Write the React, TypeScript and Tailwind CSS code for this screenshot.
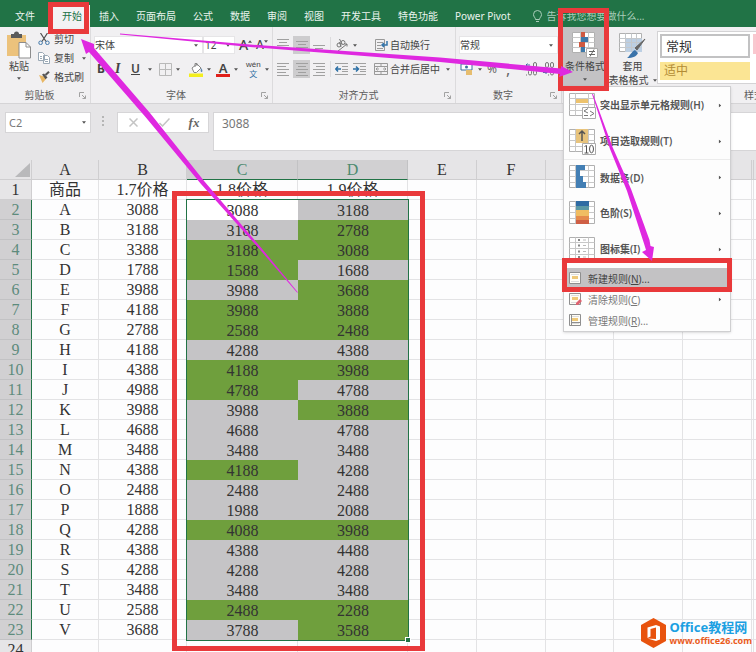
import type { ReactNode } from "react";
import clsx from "clsx";

const TABS = ["插入", "页面布局", "公式", "数据", "审阅", "视图", "开发工具", "特色功能", "Power Pivot"];

// [name, B, C, D]
const ROWS: [string, number, number, number][] = [
  ["A", 3088, 3088, 3188],
  ["B", 3188, 3188, 2788],
  ["C", 3388, 3188, 3088],
  ["D", 1788, 1588, 1688],
  ["E", 3988, 3988, 3688],
  ["F", 4188, 3988, 3888],
  ["G", 2788, 2588, 2488],
  ["H", 4188, 4288, 4388],
  ["I", 4388, 4188, 3988],
  ["J", 4988, 4788, 4788],
  ["K", 3988, 3988, 3888],
  ["L", 4688, 4688, 4788],
  ["M", 3488, 3488, 3488],
  ["N", 4388, 4188, 4288],
  ["O", 2488, 2488, 2488],
  ["P", 1888, 1988, 2088],
  ["Q", 4288, 4088, 3988],
  ["R", 4388, 4388, 4488],
  ["S", 4288, 4288, 4288],
  ["T", 3488, 3488, 3488],
  ["U", 2588, 2488, 2288],
  ["V", 3688, 3788, 3588],
];

const HEADERS = ["A", "B", "C", "D", "E", "F", "", "", "", ""];

function Caret({ className }: { className?: string }) {
  return (
    <svg viewBox="0 0 5 3" className={clsx("w-1 h-[3px] shrink-0", className)} aria-hidden="true">
      <path d="M0 0h5L2.500 3z" fill="#555" />
    </svg>
  );
}

function Launcher() {
  return (
    <svg viewBox="0 0 7 7" className="w-[7px] h-[7px]" fill="none" stroke="#a2a2a2" aria-hidden="true">
      <path d="M.5 5V.5H5M3 3l3.500 3.500M6.500 3.500v3h-3" />
    </svg>
  );
}

function Group({ label, className, children }: { label: string; className: string; children: ReactNode }) {
  return (
    <section className={clsx("flex flex-col shrink-0 border-r border-[#dcdbdd]", className)}>
      <div className="h-[60px]">{children}</div>
      <div className="flex items-center h-4 pr-1">
        <span className="flex-1 text-center text-[#5d5d5d]">{label}</span>
        <Launcher />
      </div>
    </section>
  );
}

function Tool({ label, className, children }: { label: string; className: string; children: ReactNode }) {
  return (
    <button type="button" aria-label={label} className={clsx("flex items-center h-[18px] shrink-0", className)}>
      {children}
    </button>
  );
}

const LINES: Record<string, string> = {
  top: "M0 2.500h12M2 5.500h8M0 8.500h12",
  middle: "M0 4.500h12M2 7.500h8M0 10.500h12",
  bottom: "M0 8.500h12M2 11.500h8M0 14.500h12",
  left: "M0 2.500h12M0 5.500h9M0 8.500h12M0 11.500h9M0 14.500h12",
  center: "M0 2.500h12M2 5.500h8M0 8.500h12M2 11.500h8M0 14.500h12",
  right: "M0 2.500h12M3 5.500h9M0 8.500h12M3 11.500h9M0 14.500h12",
};

function LinesIcon({ kind }: { kind: string }) {
  return (
    <svg viewBox="0 0 12 17" className="w-3 h-[17px]" stroke="#a0a0a0" aria-hidden="true">
      <path d={LINES[kind]} />
    </svg>
  );
}

function IndentIcon({ flip }: { flip?: boolean }) {
  return (
    <svg viewBox="0 0 13 12" className="w-[13px] h-3" fill="none" stroke="#a0a0a0" aria-hidden="true">
      <path d="M0 .5h13M7 3.500h6M7 6.500h6M7 8.500h6M0 11.500h13" />
      <path d={flip ? "M0 6h5M3 3.500L5.500 6 3 8.500" : "M1 6h5M3 3.500L.8 6 3 8.500"} stroke="#2b6fa5" strokeWidth="1.500" />
    </svg>
  );
}

function Divider({ className }: { className?: string }) {
  return <span className={clsx("w-px h-4 bg-[#dcdbdd] shrink-0", className)} />;
}

function ClipboardGroup() {
  return (
    <Group label="剪贴板" className="w-[91px]">
      <div className="flex pt-1">
        <button type="button" className="flex flex-col items-center w-[38px] shrink-0">
          <svg viewBox="0 0 26 28" className="w-[26px] h-7" aria-hidden="true">
            <path d="M1 4h19v21H1z" fill="#ecc27c" />
            <path d="M5 3h3a2.500 2.500 0 0 1 5 0h3v4H5z" fill="#5b5b5b" />
            <path d="M13 11.500h7l4.500 4.500v11H13z" fill="#fff" stroke="#8d8d8d" />
            <path d="M20 11.500V16h4.500" fill="none" stroke="#8d8d8d" />
          </svg>
          <span className="leading-[14px]">粘贴</span>
          <Caret className="mt-1" />
        </button>
        <div className="flex flex-col pt-px">
          <button type="button" className="flex items-center gap-1 h-[14px]">
            <svg viewBox="0 0 12 12" className="w-3 h-3" fill="none" aria-hidden="true">
              <path d="M2.500 0l5.500 8.500M9.500 0L4 8.500" stroke="#4e4e4e" strokeWidth="1.200" />
              <circle cx="2.600" cy="9.800" r="1.800" stroke="#3f76a8" />
              <circle cx="9.400" cy="9.800" r="1.800" stroke="#3f76a8" />
            </svg>
            剪切
          </button>
          <button type="button" className="flex items-center gap-1 h-6">
            <svg viewBox="0 0 12 12" className="w-3 h-3" fill="#fff" stroke="#9aa8b5" aria-hidden="true">
              <path d="M.5.5h4l2 2v6h-6zM5.500 3.500h4l2 2v6h-6z" />
              <path d="M2 4.500h2M2 6.500h2M7 7.500h3M7 9.500h3" />
            </svg>
            复制
            <Caret className="ml-1" />
          </button>
          <button type="button" className="flex items-center gap-1 h-[14px]">
            <svg viewBox="0 0 12 12" className="w-3 h-3" aria-hidden="true">
              <path d="M1 4l5 1.500L8 8l-3.500 4z" fill="#e8b765" />
              <path d="M4 3.500l2-1 3.500 4-2 1.800z" fill="#555" />
              <path d="M7.500 4L11 .8" stroke="#555" strokeWidth="2" />
            </svg>
            格式刷
          </button>
        </div>
      </div>
    </Group>
  );
}

function FontGroup() {
  return (
    <Group label="字体" className="w-[182px]">
      <div className="flex items-center pt-[9px] pl-[3px]">
        <div className="flex items-center w-[109px] h-[18px] pr-1 bg-white border border-[#e6e5e7]">
          <select aria-label="字体" className="flex-1 h-4 appearance-none">
            <option>宋体</option>
          </select>
          <Caret />
        </div>
        <div className="flex items-center w-8 h-[18px] pl-px pr-1 bg-white border border-[#e6e5e7]">
          <select aria-label="字号" className="flex-1 min-w-0 h-4 appearance-none">
            <option>12</option>
          </select>
          <Caret />
        </div>
        <Tool label="增大字号" className="ml-1 w-[17px] text-sm font-medium">
          A<Caret className="mb-2 rotate-180" />
        </Tool>
        <Tool label="减小字号" className="w-4 text-xs font-medium">
          A<Caret className="mb-2" />
        </Tool>
      </div>
      <div className="flex items-center pt-[6px] pl-[6px]">
        <Tool label="加粗" className="w-[18px] text-xs font-bold">B</Tool>
        <Tool label="倾斜" className="w-4 font-['Liberation_Serif',serif] text-sm italic font-bold">I</Tool>
        <Tool label="下划线" className="w-6 gap-2 text-xs font-semibold">
          <span className="underline">U</span>
          <Caret />
        </Tool>
        <Tool label="边框" className="ml-1 w-[30px] gap-1">
          <svg viewBox="0 0 13 13" className="w-[13px] h-[13px]" fill="none" stroke="#b9b9b9" aria-hidden="true">
            <path d="M.5.5h12v12H.5zM6.500.5v12M.5 6.500h12" />
          </svg>
          <Caret />
        </Tool>
        <Tool label="填充颜色" className="w-[27px] gap-1">
          <svg viewBox="0 0 14 15" className="w-[14px] h-[15px]" aria-hidden="true">
            <path d="M3 6l5-4 4 4-4.500 4.500H5z" fill="#fff" stroke="#888" />
            <path d="M6 5V1.500h2V4" fill="none" stroke="#888" />
            <path d="M12 6c2 2 1.500 4 .5 4s-1-2-.5-4z" fill="#5c87b0" />
            <path d="M0 11.500h14V15H0z" fill="#f3ee1f" />
          </svg>
          <Caret />
        </Tool>
        <Tool label="字体颜色" className="w-[30px] gap-1">
          <span className="w-[14px] h-[15px] text-center text-[13px] leading-3 font-semibold border-b-3 border-[#e0201b]">A</span>
          <Caret />
        </Tool>
        <Tool label="拼音" className="w-[22px] gap-1">
          <span className="flex flex-col items-center text-[8px] leading-[9px]">
            <span className="font-['Liberation_Sans',sans-serif]">wén</span>
            <span className="font-['Noto_Sans_CJK_SC',sans-serif] text-[#2f6ea3]">文</span>
          </span>
          <Caret />
        </Tool>
      </div>
    </Group>
  );
}

function AlignGroup() {
  return (
    <Group label="对齐方式" className="w-[183px]">
      <div className="flex items-center pt-[9px] pl-1">
        <Tool label="顶端对齐" className="w-4"><LinesIcon kind="top" /></Tool>
        <Tool label="垂直居中" className="w-[17px] justify-center bg-[#cdccce]"><LinesIcon kind="middle" /></Tool>
        <Tool label="底端对齐" className="w-4 pl-[3px]"><LinesIcon kind="bottom" /></Tool>
        <Divider className="ml-1" />
        <Tool label="方向" className="w-[43px] pl-1 gap-1">
          <svg viewBox="0 0 14 14" className="w-[14px] h-[14px]" fill="none" stroke="#777" aria-hidden="true">
            <circle cx="4" cy="7" r="2" />
            <circle cx="8" cy="4.500" r="2" />
            <path d="M6 9L4.500 4M7 6L4.500 1M3 13l9-7M9.500 6H12v2.500" />
          </svg>
          <Caret />
        </Tool>
        <button type="button" className="flex items-center gap-[2px]">
          <svg viewBox="0 0 14 14" className="w-[14px] h-[14px]" fill="none" stroke="#999" aria-hidden="true">
            <path d="M1.500 1.500h9v11h-9zM3 4.500h6M3 7.500h4M3 10.500h6" />
            <path d="M13 3v4H8M10 5L8 7l2 2" stroke="#3675aa" strokeWidth="1.500" />
          </svg>
          自动换行
        </button>
      </div>
      <div className="flex items-center pt-[6px] pl-1">
        <Tool label="左对齐" className="w-4"><LinesIcon kind="left" /></Tool>
        <Tool label="居中" className="w-[17px] justify-center bg-[#cdccce]"><LinesIcon kind="center" /></Tool>
        <Tool label="右对齐" className="w-4 pl-[3px]"><LinesIcon kind="right" /></Tool>
        <Divider className="ml-1" />
        <Tool label="减少缩进" className="ml-1 w-[18px]"><IndentIcon /></Tool>
        <Tool label="增加缩进" className="w-[21px]"><IndentIcon flip /></Tool>
        <button type="button" className="flex items-center gap-[2px]">
          <svg viewBox="0 0 14 14" className="w-[14px] h-[14px]" fill="none" stroke="#999" aria-hidden="true">
            <path d="M.5 1.500h13v11H.5zM.5 4.500h13M.5 9.500h13M7 1.500v3M7 9.500v3" />
            <path d="M2 7h3M9 7h3M3.500 5.500L2 7l1.500 1.500M10.500 5.500L12 7l-1.500 1.500" />
          </svg>
          合并后居中
          <Caret className="ml-1" />
        </button>
      </div>
    </Group>
  );
}

/* zeros on two lines with a small blue arrow */
function DecimalIcon({ more }: { more?: boolean }) {
  return (
    <svg viewBox="0 0 13 14" className="w-[13px] h-[14px]" fill="none" stroke="#777" aria-hidden="true">
      <rect x="8.500" y=".5" width="3" height="5" rx="1.500" />
      <rect x="3.500" y={more ? "8" : ".5"} width="3" height="5" rx="1.500" />
      <rect x="8.500" y="8" width="3" height="5" rx="1.500" />
      <path d={more ? "M1 13h1M6 5.500h1" : "M1 5.500h1M6 13h1"} />
      <path d={more ? "M5 3H1M2.500 1.500L1 3l1.500 1.500" : "M1 10.500h4M3.500 9L5 10.500 3.500 12"} stroke="#3b6f9e" />
    </svg>
  );
}

function NumberGroup() {
  return (
    <Group label="数字" className="w-[106px]">
      <div className="flex items-center pt-[9px] pl-[3px]">
        <div className="flex items-center w-[99px] h-[18px] pr-1 bg-white border border-[#e6e5e7]">
          <select aria-label="数字格式" className="flex-1 h-4 appearance-none">
            <option>常规</option>
          </select>
          <Caret />
        </div>
      </div>
      <div className="flex items-center pt-[6px] pl-1 text-[#666]">
        <Tool label="会计数字格式" className="w-[27px] gap-1">
          <svg viewBox="0 0 14 14" className="w-[14px] h-[14px]" aria-hidden="true">
            <path d="M1 2h11v6H1z" fill="#fff" stroke="#3b6f9e" />
            <circle cx="6.500" cy="5" r="1.500" fill="#3b6f9e" />
            <path d="M6 8h6v5H6z" fill="#e6bd6f" />
          </svg>
          <Caret />
        </Tool>
        <Tool label="百分比样式" className="w-[19px] text-xs">%</Tool>
        <Tool label="千位分隔样式" className="w-[19px] text-base">,</Tool>
        <Tool label="增加小数位数" className="w-[17px]"><DecimalIcon more /></Tool>
        <Tool label="减少小数位数" className="w-[14px]"><DecimalIcon /></Tool>
      </div>
    </Group>
  );
}

/* small worksheet drawing shared by the larger rule icons */
function SheetIcon({ children }: { children?: ReactNode }) {
  return (
    <svg viewBox="0 0 27 27" className="w-[27px] h-[27px] shrink-0" aria-hidden="true">
      <path d="M.5 1.500h25v22H.5z" fill="#fff" stroke="#b0b0b0" />
      <path d="M.5 6.500h25M.5 12.500h25M.5 18.500h25M6.500 1.500v22M19.500 1.500v22" stroke="#c8c8c8" fill="none" />
      {children}
    </svg>
  );
}

function RuleIcon({ kind }: { kind?: string }) {
  return (
    <svg viewBox="0 0 13 13" className="w-[13px] h-[13px] shrink-0" aria-hidden="true">
      <path d="M.5.5h11v11H.5z" fill="#fffdf6" stroke="#8f8f8f" />
      <path d="M3 4h6v3H3z" fill="#efc978" />
      <path d="M2 2.500h8M2 9.500h8" stroke="#ddd" />
      {kind === "clear" && <path d="M7 10l4-4 2 2-4 4H7z" fill="#df6370" />}
      {kind === "manage" && <path d="M2.500.5v11M3 8.500h8" stroke="#8f8f8f" />}
    </svg>
  );
}

const BIG_ITEMS = [
  {
    label: "突出显示单元格规则(H)",
    icon: (
      <SheetIcon>
        <path d="M7 7h12v4H7z" fill="#edc36e" />
        <path d="M13.500 15.500h13v11h-13z" fill="#fff" stroke="#aaa" />
        <path d="M19 16.500L15 19l4 2M15 23.500h4M21 19l4 2.500-4 2.500" fill="none" stroke="#777" />
      </SheetIcon>
    ),
  },
  {
    label: "项目选取规则(T)",
    icon: (
      <SheetIcon>
        <path d="M7 1h12v14H7z" fill="#e8c47d" />
        <path d="M13 13V3M10 6l3-3 3 3" fill="none" stroke="#555" strokeWidth="1.500" />
        <path d="M13.500 15.500h13v11h-13z" fill="#fff" stroke="#aaa" />
        <path d="M15.500 18.500l2-1V25M15.500 25h4" fill="none" stroke="#555" />
        <ellipse cx="22.500" cy="21" rx="2" ry="3.800" fill="none" stroke="#555" />
      </SheetIcon>
    ),
  },
  {
    label: "数据条(D)",
    icon: (
      <SheetIcon>
        <path d="M7 1h9v5H7zM7 6h4v6H7zM7 12h7v6H7zM7 18h10v6H7z" fill="#437fb4" />
      </SheetIcon>
    ),
  },
  {
    label: "色阶(S)",
    icon: (
      <SheetIcon>
        <path d="M7 1h13v5H7z" fill="#2f6ba3" />
        <path d="M7 6h13v4H7z" fill="#5b98a5" />
        <path d="M7 10h13v6H7z" fill="#f0bd62" />
        <path d="M7 16h13v4H7z" fill="#e58b4c" />
        <path d="M7 20h13v4H7z" fill="#cf5f45" />
      </SheetIcon>
    ),
  },
  {
    label: "图标集(I)",
    icon: (
      <SheetIcon>
        <path d="M9 4h2M9 9.500h2M9 15.500h2M9 21h2" stroke="#888" strokeWidth="2" />
        <path d="M14 4h3M14 9.500h3M14 15.500h3M14 21h3" stroke="#bbb" />
      </SheetIcon>
    ),
  },
];

const SMALL_ITEMS = [
  { name: "新建规则", mnemonic: "N", dots: "...", kind: "new", active: true },
  { name: "清除规则", mnemonic: "C", dots: "", kind: "clear", active: false },
  { name: "管理规则", mnemonic: "R", dots: "...", kind: "manage", active: false },
];

function FormatMenu() {
  return (
    <div role="menu" className="absolute top-full left-px z-10 w-[168px] -mt-px bg-[#fdfdfd] border border-[#cfcfd1] shadow-sm">
      {BIG_ITEMS.map((item, i) => (
        <button
          key={item.label}
          type="button"
          role="menuitem"
          className={clsx(
            "flex items-center w-full h-9 pl-[5px] pr-2 gap-1 font-semibold text-[#555] whitespace-nowrap",
            i === 2 && "border-t border-[#ececec]",
          )}
        >
          {item.icon}
          <span className="flex-1 text-left">{item.label}</span>
          <Caret className="-rotate-90" />
        </button>
      ))}
      <div className="pt-px">
        {SMALL_ITEMS.map((item) => (
          <button
            key={item.name}
            type="button"
            role="menuitem"
            className={clsx(
              "flex items-center w-full h-[21px] pl-[5px] pr-2 gap-[6px]",
              item.active ? "bg-[#c3c2c4] text-[#444]" : "text-[#777]",
            )}
          >
            <RuleIcon kind={item.kind} />
            <span className="flex-1 text-left">
              {item.name}(<u>{item.mnemonic}</u>){item.dots}
            </span>
            {item.kind === "clear" && <Caret className="-rotate-90" />}
          </button>
        ))}
      </div>
    </div>
  );
}

function StylesGroup() {
  return (
    <section className="flex flex-col shrink-0 w-[400px]">
      <div className="flex h-[60px]">
        <div className="relative w-[46px] h-[60px]">
          <button type="button" className="flex flex-col items-center w-full h-full pt-1 bg-[#c3c2c4] whitespace-nowrap">
            <svg viewBox="0 0 26 27" className="w-[26px] h-[27px]" aria-hidden="true">
              <path d="M.5 1.500h22v20H.5z" fill="#fff" stroke="#b0b0b0" />
              <path d="M.5 6.500h22M.5 11.500h22M.5 16.500h22M8.500 1.500v20M16.500 1.500v20" stroke="#c8c8c8" />
              <path d="M9 1h4v5H9zM7 11h6v5H7z" fill="#cf5941" />
              <path d="M9 6h7v5H9zM9 16h4v5H9z" fill="#3e78a9" />
              <path d="M14.500 17.500h11v9h-11z" fill="#fff" stroke="#aaa" />
              <path d="M17 20.500h6M17 23.500h6M22 18.500l-4 7" stroke="#666" />
            </svg>
            <span className="leading-4">条件格式</span>
            <Caret className="mt-1" />
          </button>
          <FormatMenu />
        </div>
        <button type="button" className="flex flex-col items-center w-[49px] pt-[5px] whitespace-nowrap">
          <svg viewBox="0 0 27 26" className="w-[27px] h-[26px]" aria-hidden="true">
            <path d="M.5 1.500h22v18H.5z" fill="#fff" stroke="#b0b0b0" />
            <path d="M6 6h17v14H6z" fill="#bccfe3" />
            <path d="M.5 6.500h22M.5 10.500h22M.5 15.500h22M6.500 1.500v18M12.500 1.500v18M17.500 1.500v18" stroke="#c4c8cc" />
            <path d="M26 7l-8 11-2-2z" fill="#666" stroke="#666" />
            <path d="M16 18l3 3c-1 3-5 5-11 5 3-2 4-6 8-8z" fill="#3a73aa" />
          </svg>
          <span className="leading-4">套用</span>
          <span className="flex items-center gap-1 leading-3">
            表格格式
            <Caret />
          </span>
        </button>
        <div className="flex gap-[3px] mt-1 h-[53px] pt-[2px] pl-[2px] border border-[#d4d3d5] bg-white">
          <div className="flex flex-col w-[90px] gap-1">
            <button type="button" className="h-6 pl-1 border-2 border-[#c2c2c3] text-left text-[13px] leading-5 text-[#333]">常规</button>
            <button type="button" className="h-[18px] pl-1 bg-[#fbe594] text-left text-xs text-[#b28b35]">适中</button>
          </div>
          <div className="flex flex-col w-[90px]">
            <button type="button" aria-label="差" className="h-5 bg-[#f8c8cf]" />
          </div>
        </div>
      </div>
      <span className="pl-[182px] leading-4 text-[#5d5d5d]">样式</span>
    </section>
  );
}

function FormulaBar() {
  return (
    <div className="flex items-start pt-2 pl-[5px] h-14 bg-[#e6e5e7] shrink-0">
      <div className="flex items-center w-[86px] h-[21px] pl-[3px] pr-1 bg-white border border-[#d6d5d7]">
        <input aria-label="名称框" defaultValue="C2" className="flex-1 min-w-0 text-[11px] text-[#777]" />
        <Caret />
      </div>
      <svg viewBox="0 0 3 11" className="w-[3px] h-[11px] mt-1 ml-[11px]" fill="#b5b5b5" aria-hidden="true">
        <path d="M0 0h2v2H0zM0 4h2v2H0zM0 8h2v2H0z" />
      </svg>
      <div className="flex items-center w-[92px] h-[21px] ml-3 bg-white border border-[#d6d5d7]">
        <button type="button" aria-label="取消" className="flex justify-center w-[30px]">
          <svg viewBox="0 0 9 9" className="w-[9px] h-[9px]" stroke="#c4c4c4" strokeWidth="1.500" aria-hidden="true">
            <path d="M.5.5l8 8M8.500.5l-8 8" />
          </svg>
        </button>
        <button type="button" aria-label="输入" className="flex justify-center w-[32px]">
          <svg viewBox="0 0 11 9" className="w-[11px] h-[9px]" fill="none" stroke="#c4c4c4" strokeWidth="1.500" aria-hidden="true">
            <path d="M.5 5l3 3L10.500.5" />
          </svg>
        </button>
        <button type="button" aria-label="插入函数" className="w-7 font-['Liberation_Serif',serif] text-[13px] italic font-bold text-[#666]">fx</button>
      </div>
      <div className="flex-1 ml-[4px] h-[39px] pl-2 bg-white border border-r-0 border-[#d6d5d7]">
        <input aria-label="编辑栏" defaultValue="3088" className="w-full h-5 text-xs text-[#777]" />
      </div>
    </div>
  );
}

// C2 stays white because it is the active cell
function fillOf(before: number, value: number, active: boolean) {
  if (active) return "bg-white";
  return value < before ? "bg-[#6f9f3d]" : "bg-[#c5c4c6]";
}

const CELL = "h-5 p-0 border-r border-b border-[#e3e3e5]";

function Blanks() {
  return (
    <>
      {HEADERS.slice(4).map((_, i) => (
        <td key={i} className={CELL} />
      ))}
      <td className="h-5 p-0 border-b border-[#e3e3e5]" />
    </>
  );
}

function Sheet() {
  return (
    <div className="relative flex-1 min-h-0 overflow-hidden bg-[#fdfdfe] font-['Liberation_Serif','Noto_Sans_CJK_SC',serif] text-base leading-[19px] text-[#333]">
      <table className="w-full table-fixed border-separate border-spacing-0 text-center">
        <colgroup>
          <col className="w-8" />
          <col className="w-[67px]" />
          <col className="w-[88px]" />
          <col className="w-[111px]" />
          <col className="w-[110px]" />
          <col className="w-[69px]" />
          <col className="w-[69px]" />
          <col className="w-[68px]" />
          <col className="w-[69px]" />
          <col className="w-[69px]" />
          <col />
        </colgroup>
        <thead>
          <tr>
            <th className="h-5 p-0 bg-[#e6e5e7] border-r border-b border-[#cfced0]">
              <svg viewBox="0 0 16 14" className="w-4 h-[14px] ml-auto" aria-hidden="true">
                <path d="M15 0v14H0z" fill="#b9b9bb" />
              </svg>
            </th>
            {HEADERS.map((name, i) => (
              <th
                key={i}
                className={clsx(
                  "h-5 p-0 border-r border-b font-normal",
                  i === 2 || i === 3
                    ? "bg-[#d1d0d2] border-r-[#c2c2c4] border-b-[#217346] text-[#4d8a70]"
                    : "bg-[#e6e5e7] border-[#cfced0]",
                )}
              >
                {name}
              </th>
            ))}
            <th className="h-5 p-0 bg-[#e6e5e7] border-b border-[#cfced0]" />
          </tr>
        </thead>
        <tbody>
          <tr>
            <th className="h-5 p-0 font-normal bg-[#e6e5e7] border-r border-b border-[#cfced0]">1</th>
            <td className={CELL}>商品</td>
            <td className={CELL}>1.7价格</td>
            <td className={CELL}>1.8价格</td>
            <td className={CELL}>1.9价格</td>
            <Blanks />
          </tr>
          {ROWS.map(([name, b, c, d], i) => (
            <tr key={name}>
              <th className="h-5 p-0 font-normal bg-[#d1d0d2] border-r border-b border-r-[#217346] border-b-[#c2c2c4] text-[#5d8b7c]">
                {i + 2}
              </th>
              <td className={CELL}>{name}</td>
              <td className={CELL}>{b}</td>
              <td className={clsx("h-5 p-0", fillOf(b, c, i === 0))}>{c}</td>
              <td className={clsx("h-5 p-0", fillOf(c, d, false))}>{d}</td>
              <Blanks />
            </tr>
          ))}
          <tr>
            <th className="h-5 p-0 font-normal bg-[#e6e5e7] border-r border-b border-[#cfced0]">24</th>
            <td className={CELL} />
            <td className={CELL} />
            <td className={CELL} />
            <td className={CELL} />
            <Blanks />
          </tr>
        </tbody>
      </table>
      {/* selection outline with its fill handle */}
      <div className="absolute left-[186px] top-[39px] w-[223px] h-[442px] border border-[#217346]">
        <span className="absolute -right-[2px] -bottom-[2px] size-1 bg-[#217346] outline outline-white" />
      </div>
    </div>
  );
}

function Annotations() {
  return (
    <div className="absolute inset-0 z-20 pointer-events-none" aria-hidden="true">
      <div className="absolute left-12 top-[2px] w-[41px] h-8 border-5 border-[#e9393b]" />
      <div className="absolute left-[558px] top-2 w-[51px] h-[83px] border-5 border-[#e9393b]" />
      <div className="absolute left-[562px] top-[258px] w-[170px] h-[34px] border-5 border-[#e9393b]" />
      <div className="absolute left-[172px] top-[191px] w-[253px] h-[460px] border-5 border-[#e9393b]" />
      <svg viewBox="0 0 756 652" className="absolute left-0 top-0 w-[756px] h-[652px]" fill="#df28e0">
        <path d="M81 39L94 44L94 48L150 113L204.500 181.500L260.500 247L298 292.500L297 292.500L259 248.500L201 184L145.500 117L89 52L86 54Z" />
        <path d="M120 33.500L250 44.500L440 57.500L561 68.500L561 66L573 72L559 77L560 74L440 62L250 47L120 34.500Z" />
        <path d="M592 94L593 94L612.500 147L631 189L649.500 240L650.500 246L654 247L652 261L642 252L646 250L643.500 242L627 191L610 149Z" />
      </svg>
    </div>
  );
}

function Watermark() {
  return (
    <a href="#office26" className="absolute right-1 bottom-1 z-10 flex items-center gap-1 whitespace-nowrap">
      <svg viewBox="0 0 25 30" className="w-[25px] h-[30px]" aria-hidden="true">
        <path d="M12.500 0L25 7v16l-12.500 7L0 23V7z" fill="#e8530e" />
        <path d="M6.500 9.500L15 7l4 1.500v13L15 23l-8.500-2.500L15 21V9.500L9.500 11v7.500l-3 1.500z" fill="#fff" />
      </svg>
      <span className="flex flex-col">
        <span className="text-[13px] leading-4 font-bold text-[#1ba0e2]">Office教程网</span>
        <span className="text-[9px] leading-3 font-bold text-[#ea5b1c]">www.office26.com</span>
      </span>
    </a>
  );
}

export default function App() {
  return (
    <div className="relative flex flex-col h-screen overflow-hidden bg-[#e6e5e7] font-['Noto_Sans','Noto_Sans_CJK_SC',sans-serif] text-[10px] leading-4 text-[#444]">
      <nav className="flex items-end h-[27px] shrink-0 bg-[#217346] text-[#eaf3ee] whitespace-nowrap">
        <button type="button" className="w-[53px] h-[22px] pl-[15px] text-left">文件</button>
        <button type="button" className="w-[37px] h-[22px] pl-[9px] text-left bg-[#f3f2f4] text-[#217346]">开始</button>
        {TABS.map((tab) => (
          <button key={tab} type="button" className="h-[22px] pl-[9px] pr-2">
            {tab}
          </button>
        ))}
        <label className="flex items-center flex-1 min-w-0 h-[22px] pl-[14px] gap-[5px]">
          <svg viewBox="0 0 9 13" className="w-[9px] h-[13px] shrink-0" fill="none" stroke="#a9cdb9" aria-hidden="true">
            <path d="M2.500 9.500C2.500 7.500.5 7 .5 4.500a4 4 0 0 1 8 0c0 2.500-2 3-2 5zM3 11.500h3" />
          </svg>
          <input
            aria-label="操作说明搜索"
            placeholder="告诉我您想要做什么..."
            className="flex-1 min-w-0 placeholder:text-[#a9cdb9]"
          />
        </label>
      </nav>
      <div className="flex h-[77px] shrink-0 border-b border-[#d5d4d6] bg-[#f1f0f2]">
        <ClipboardGroup />
        <FontGroup />
        <AlignGroup />
        <NumberGroup />
        <StylesGroup />
      </div>
      <FormulaBar />
      <Sheet />
      <Annotations />
      <Watermark />
    </div>
  );
}
